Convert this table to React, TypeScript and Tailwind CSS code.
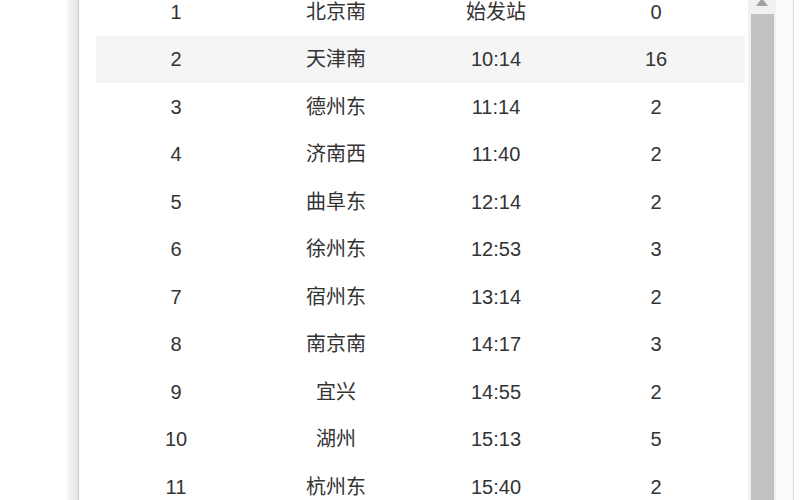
import React from 'react';

const ROWS = [
  { no: '1', station: '北京南', time: '始发站', stop: '0' },
  { no: '2', station: '天津南', time: '10:14', stop: '16' },
  { no: '3', station: '德州东', time: '11:14', stop: '2' },
  { no: '4', station: '济南西', time: '11:40', stop: '2' },
  { no: '5', station: '曲阜东', time: '12:14', stop: '2' },
  { no: '6', station: '徐州东', time: '12:53', stop: '3' },
  { no: '7', station: '宿州东', time: '13:14', stop: '2' },
  { no: '8', station: '南京南', time: '14:17', stop: '3' },
  { no: '9', station: '宜兴', time: '14:55', stop: '2' },
  { no: '10', station: '湖州', time: '15:13', stop: '5' },
  { no: '11', station: '杭州东', time: '15:40', stop: '2' },
];

export default function App() {
  return (
    <div
      className="flex h-[500px] w-[800px] overflow-hidden bg-white text-[#333]"
      style={{ fontFamily: '"Liberation Sans", "Noto Sans CJK SC", sans-serif' }}
    >
      <div className="w-[67px] shrink-0" />
      <div className="w-[11px] shrink-0 bg-gradient-to-r from-[#f7f7f7] to-[#e6e6e6]" />
      <div className="w-px shrink-0 bg-[#c8c8c8]" />

      <div className="w-[666px] shrink-0 pl-[17px]">
        <div className="-mt-[12px] w-[649px]">
          {ROWS.map((r, i) => (
            <div
              key={r.no}
              className={`grid h-[47.5px] grid-cols-[160px_160px_160px_160px] items-center text-center text-[20px] ${
                i === 1 ? 'bg-[#f5f5f5]' : ''
              }`}
            >
              <span>{r.no}</span>
              <span>{r.station}</span>
              <span>{r.time}</span>
              <span>{r.stop}</span>
            </div>
          ))}
        </div>
      </div>

      <div className="w-[3px] shrink-0" />
      <div className="flex w-[28px] shrink-0 flex-col items-center bg-[#f1f1f1]">
        <div className="-mt-[10px] flex h-[25px] w-full items-center justify-center">
          <svg width="12" height="8" viewBox="0 0 12 8">
            <path d="M6 0 L12 8 L0 8 Z" fill="#a3a3a3" />
          </svg>
        </div>
        <div className="h-[500px] w-[23px] bg-[#c1c1c1]" />
      </div>
      <div className="w-[17px] shrink-0 bg-[#fbfbfb]" />
      <div className="w-px shrink-0 bg-[#d6d6d6]" />
      <div className="flex-1" />
    </div>
  );
}
